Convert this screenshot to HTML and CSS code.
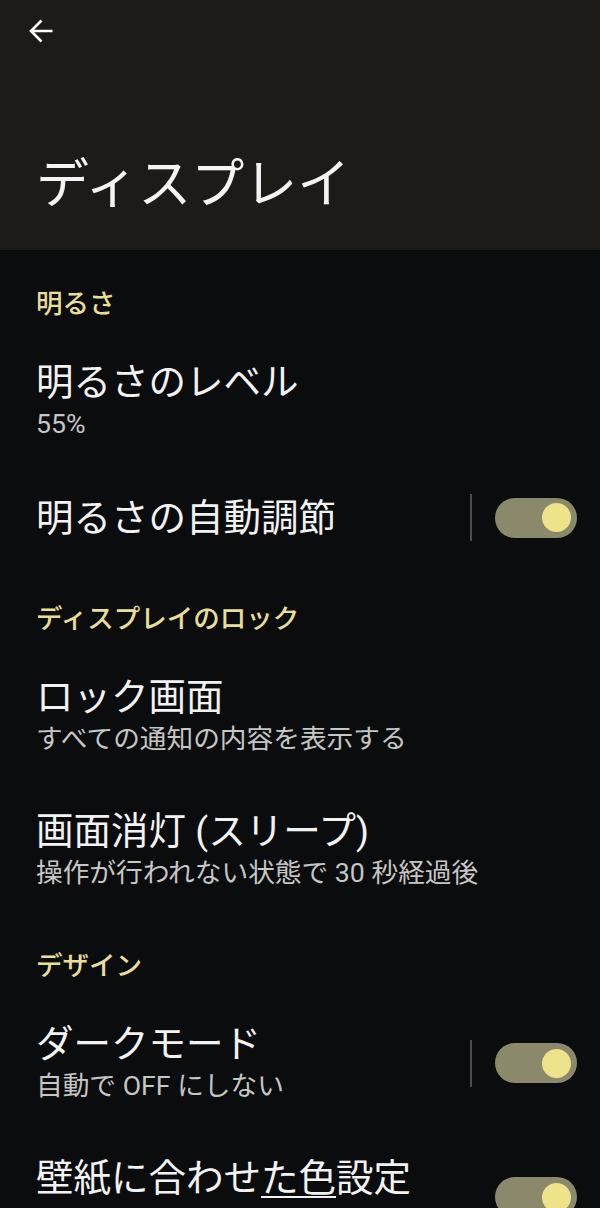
FILE: index.html
```html
<!DOCTYPE html>
<html lang="ja">
<head>
<meta charset="utf-8">
<title>ディスプレイ</title>
<link rel="stylesheet" href="styles.css">
</head>
<body>
<div class="screen">
  <header class="appbar">
    <div class="back">
      <svg width="26" height="26" viewBox="0 0 26 26"><path d="M3 13H24.5M13.5 2.5L3 13l10.5 10.5" fill="none" stroke="#ffffff" stroke-width="2.6" stroke-linecap="butt" stroke-linejoin="miter"/></svg>
    </div>
    <h1 class="title">ディスプレイ</h1>
  </header>
  <main class="content">
    <div class="section">明るさ</div>
    <div class="item">
      <div class="texts">
        <div class="item-title">明るさのレベル</div>
        <div class="item-sub">55%</div>
      </div>
    </div>
    <div class="item single">
      <div class="texts">
        <div class="item-title">明るさの自動調節</div>
      </div>
      <div class="divider"></div>
      <div class="switch"><div class="thumb"></div></div>
    </div>
    <div class="section">ディスプレイのロック</div>
    <div class="item">
      <div class="texts">
        <div class="item-title">ロック画面</div>
        <div class="item-sub">すべての通知の内容を表示する</div>
      </div>
    </div>
    <div class="item">
      <div class="texts">
        <div class="item-title">画面消灯 (スリープ)</div>
        <div class="item-sub">操作が行われない状態で 30 秒経過後</div>
      </div>
    </div>
    <div class="section">デザイン</div>
    <div class="item">
      <div class="texts">
        <div class="item-title">ダークモード</div>
        <div class="item-sub">自動で OFF にしない</div>
      </div>
      <div class="divider"></div>
      <div class="switch"><div class="thumb"></div></div>
    </div>
    <div class="item tall">
      <div class="texts">
        <div class="item-title">壁紙に合わせ<span class="ul">た色</span>設定</div>
      </div>
      <div class="switch"><div class="thumb"></div></div>
    </div>
  </main>
</div>
</body>
</html>
```
FILE: styles.css
```css
* { box-sizing: border-box; }
html, body { margin: 0; padding: 0; }
body {
  background: #0b0c0e;
  font-family: Roboto, "Noto Sans CJK JP", sans-serif;
  color: #f2f2f2;
  width: 600px;
  height: 1208px;
  overflow: hidden;
}
.screen { width: 600px; }
.appbar {
  background: #1c1b17;
  height: 250px;
  padding: 7px 0 0 17px;
}
.back {
  width: 48px;
  height: 48px;
  display: flex;
  align-items: center;
  justify-content: center;
}
.back svg { display: block; }
.title {
  margin: 98px 0 0 19px;
  font-size: 53px;
  line-height: 64px;
  font-weight: 400;
  color: #f4f4f4;
}
.content {
  padding: 5px 23px 0 36px;
  display: flex;
  flex-direction: column;
}
.section {
  padding: 31px 0 12px;
  font-size: 26.5px;
  line-height: 36px;
  font-weight: 500;
  color: #e8de98;
}
.item {
  display: flex;
  align-items: center;
  padding: 26px 0;
  min-height: 134px;
}
.item.single { min-height: 99px; padding: 26px 0 29px; }
.texts { flex: 1; min-width: 0; }
.item.tall .texts { min-height: 82px; }
.item-title {
  font-size: 37.5px;
  line-height: 44px;
  color: #f2f2f2;
  white-space: nowrap;
}
.item-sub {
  margin-top: 2px;
  font-size: 26.7px;
  line-height: 36px;
  color: #c6c6c4;
  white-space: nowrap;
}
.ul {
  text-decoration: underline;
  text-decoration-thickness: 2px;
  text-underline-offset: 5px;
}
.divider {
  width: 2px;
  height: 47px;
  background: #4e4e4c;
  margin-right: 23px;
}
.switch {
  width: 82px;
  height: 40px;
  border-radius: 20px;
  background: #8b896b;
  display: flex;
  align-items: center;
  justify-content: flex-end;
  padding-right: 6px;
}
.thumb {
  width: 29px;
  height: 29px;
  border-radius: 50%;
  background: #eee28a;
}
```
